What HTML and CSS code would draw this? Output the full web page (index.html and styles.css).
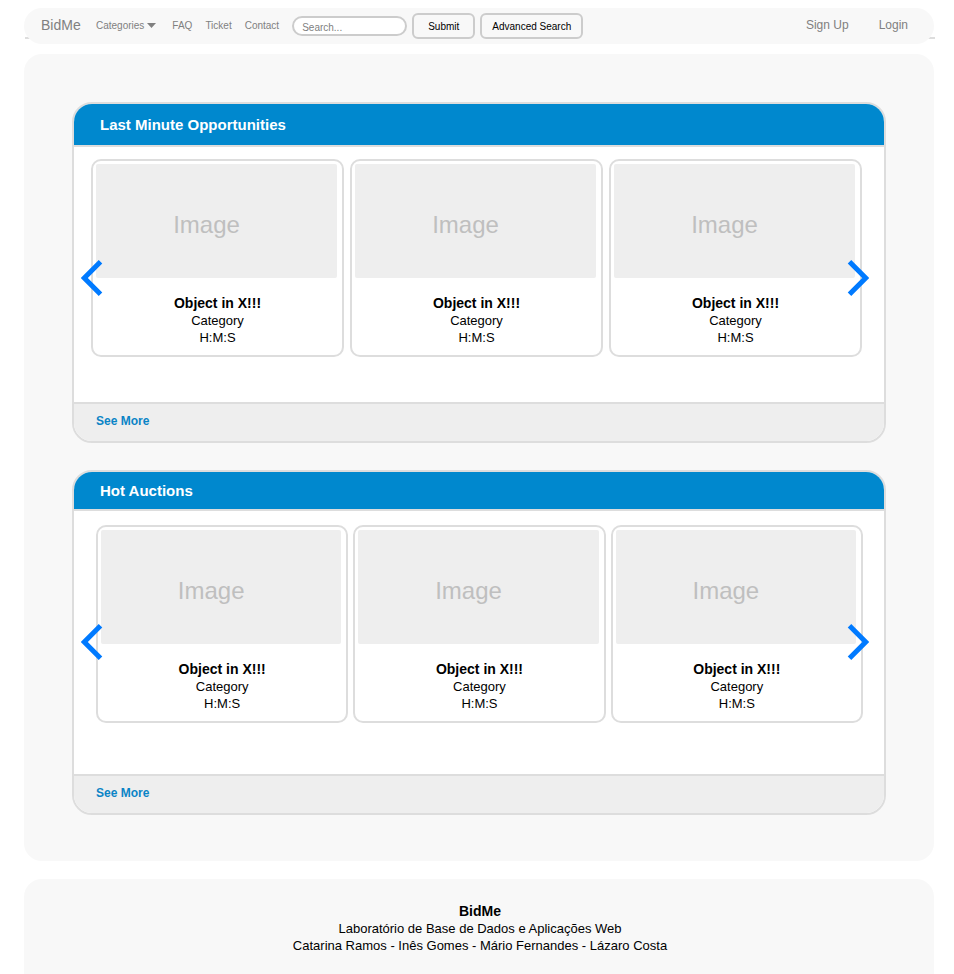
FILE: index.html
```html
<!DOCTYPE html>
<html lang="pt">
<head>
  <meta charset="utf-8">
  <meta name="viewport" content="width=device-width, initial-scale=1">
  <title>BidMe</title>
  <link rel="stylesheet" href="styles.css">
</head>
<body>
  <header class="navbar">
    <a class="brand" href="#">BidMe</a>
    <nav class="nav-links">
      <a class="categories" href="#">Categories
        <svg class="caret" width="9" height="5" viewBox="0 0 9 5" aria-hidden="true"><path d="M0 0h9L4.500 5z"/></svg>
      </a>
      <a href="#">FAQ</a>
      <a href="#">Ticket</a>
      <a href="#">Contact</a>
    </nav>
    <form class="search">
      <input type="search" aria-label="Search" placeholder="Search...">
      <button type="submit">Submit</button>
      <button type="button">Advanced Search</button>
    </form>
    <nav class="account">
      <a href="#">Sign Up</a>
      <a href="#">Login</a>
    </nav>
  </header>

  <main class="content">
    <section class="panel last-minute">
      <h2>Last Minute Opportunities</h2>
      <div class="panel-body">
        <div class="cards">
          <article class="card">
            <div class="thumb">Image</div>
            <h3>Object in X!!!</h3>
            <p>Category</p>
            <p>H:M:S</p>
          </article>
          <article class="card">
            <div class="thumb">Image</div>
            <h3>Object in X!!!</h3>
            <p>Category</p>
            <p>H:M:S</p>
          </article>
          <article class="card">
            <div class="thumb">Image</div>
            <h3>Object in X!!!</h3>
            <p>Category</p>
            <p>H:M:S</p>
          </article>
        </div>
        <button class="arrow prev" type="button" aria-label="Previous">
          <svg width="22" height="36" viewBox="0 0 22 36" aria-hidden="true"><path d="M19.500 1.800L3.300 18l16.200 16.200"/></svg>
        </button>
        <button class="arrow next" type="button" aria-label="Next">
          <svg width="22" height="36" viewBox="0 0 22 36" aria-hidden="true"><path d="M2.500 1.800L18.700 18 2.500 34.200"/></svg>
        </button>
      </div>
      <div class="panel-footer"><a href="#">See More</a></div>
    </section>

    <section class="panel hot">
      <h2>Hot Auctions</h2>
      <div class="panel-body">
        <div class="cards">
          <article class="card">
            <div class="thumb">Image</div>
            <h3>Object in X!!!</h3>
            <p>Category</p>
            <p>H:M:S</p>
          </article>
          <article class="card">
            <div class="thumb">Image</div>
            <h3>Object in X!!!</h3>
            <p>Category</p>
            <p>H:M:S</p>
          </article>
          <article class="card">
            <div class="thumb">Image</div>
            <h3>Object in X!!!</h3>
            <p>Category</p>
            <p>H:M:S</p>
          </article>
        </div>
        <button class="arrow prev" type="button" aria-label="Previous">
          <svg width="22" height="36" viewBox="0 0 22 36" aria-hidden="true"><path d="M19.500 1.800L3.300 18l16.200 16.200"/></svg>
        </button>
        <button class="arrow next" type="button" aria-label="Next">
          <svg width="22" height="36" viewBox="0 0 22 36" aria-hidden="true"><path d="M2.500 1.800L18.700 18 2.500 34.200"/></svg>
        </button>
      </div>
      <div class="panel-footer"><a href="#">See More</a></div>
    </section>
  </main>

  <footer class="site-footer">
    <strong>BidMe</strong>
    <p>Laboratório de Base de Dados e Aplicações Web</p>
    <p>Catarina Ramos - Inês Gomes - Mário Fernandes - Lázaro Costa</p>
  </footer>
</body>
</html>
```
FILE: styles.css
```css
* {
  box-sizing: border-box;
}

body {
  margin: 0;
  padding: 8px 20px 0 24px;
  background: #fff;
  color: #000;
  font-family: "Liberation Sans", Arial, sans-serif;
  font-size: 14px;
  line-height: 17px;
}

a {
  color: inherit;
  text-decoration: none;
}

h2,
h3,
p {
  margin: 0;
}

p {
  font-size: 13px;
}

/* Navigation bar */
.navbar {
  position: relative;
  display: flex;
  align-items: center;
  height: 36px;
  padding: 0 26px 2px 17px;
  border-radius: 18px;
  background: #f8f8f8;
  color: #808080;
}

/* Rule that shows past the bar's rounded ends */
.navbar::before {
  content: "";
  position: absolute;
  z-index: -1;
  left: 1px;
  right: -1px;
  bottom: 5px;
  height: 2px;
  background: #ddd;
}

.brand {
  width: 55px;
}

.nav-links {
  display: flex;
  gap: 13px;
  font-size: 10px;
}

.categories {
  display: flex;
  align-items: center;
  gap: 3px;
  margin-right: 3px;
}

.caret {
  fill: #808080;
}

.search {
  display: flex;
  align-items: center;
  gap: 5px;
  margin-left: 13px;
  padding-top: 2px;
}

.search input {
  width: 115px;
  height: 20px;
  padding: 2px 8px 0;
  border: 2px solid #ccc;
  border-radius: 10px;
  background: #fff;
  font: 10px "Liberation Sans", Arial, sans-serif;
}

.search input::placeholder {
  color: #808080;
}

.search button {
  height: 26px;
  padding: 0 10px;
  border: 2px solid #ccc;
  border-radius: 6px;
  background: #f8f8f8;
  color: #000;
  font: 10px "Liberation Sans", Arial, sans-serif;
}

.search button[type="submit"] {
  padding: 0 14px;
}

.account {
  display: flex;
  gap: 30px;
  margin-left: auto;
  font-size: 12px;
}

/* Content */
.content {
  display: grid;
  gap: 27px;
  margin-top: 10px;
  padding: 48px 48px 46px;
  border-radius: 18px;
  background: #f8f8f8;
}

.panel {
  overflow: hidden;
  border: 2px solid #ddd;
  border-radius: 20px;
  background: #fff;
}

.panel h2 {
  padding: 12px 26px;
  border-bottom: 2px solid #ddd;
  background: #0088ce;
  color: #fff;
  font-size: 15px;
  line-height: 17px;
}

.hot h2 {
  padding: 10px 26px;
}

.panel-body {
  position: relative;
  padding: 12px 22px 45px 17px;
}

.hot .panel-body {
  padding: 14px 21px 51px 22px;
}

.cards {
  display: grid;
  grid-template-columns: repeat(3, 1fr);
  gap: 6px;
}

.hot .cards {
  gap: 5px;
}

.card {
  padding: 3px 4px 9px;
  border: 2px solid #ddd;
  border-radius: 10px;
  text-align: center;
}

.thumb {
  display: flex;
  align-items: center;
  justify-content: center;
  height: 114px;
  margin: 0 1px 17px -1px;
  padding: 6px 20px 0 0;
  border-radius: 2px;
  background: #eee;
  color: #bfbfbf;
  font-size: 24px;
}

.card h3 {
  font-size: 14px;
}

.arrow {
  position: absolute;
  top: 113px;
  padding: 0;
  border: 0;
  background: none;
  line-height: 0;
}

.arrow path {
  fill: none;
  stroke: #007aff;
  stroke-width: 5;
}

.prev {
  left: 7px;
}

.next {
  right: 15px;
}

.panel-footer {
  padding: 9px 22px 11px;
  border-top: 2px solid #ddd;
  background: #eee;
  color: #0a84c6;
  font-size: 12px;
  font-weight: bold;
}

/* Footer */
.site-footer {
  margin-top: 18px;
  padding: 24px 20px 20px 22px;
  border-radius: 18px 18px 0 0;
  background: #f8f8f8;
  text-align: center;
}
```
